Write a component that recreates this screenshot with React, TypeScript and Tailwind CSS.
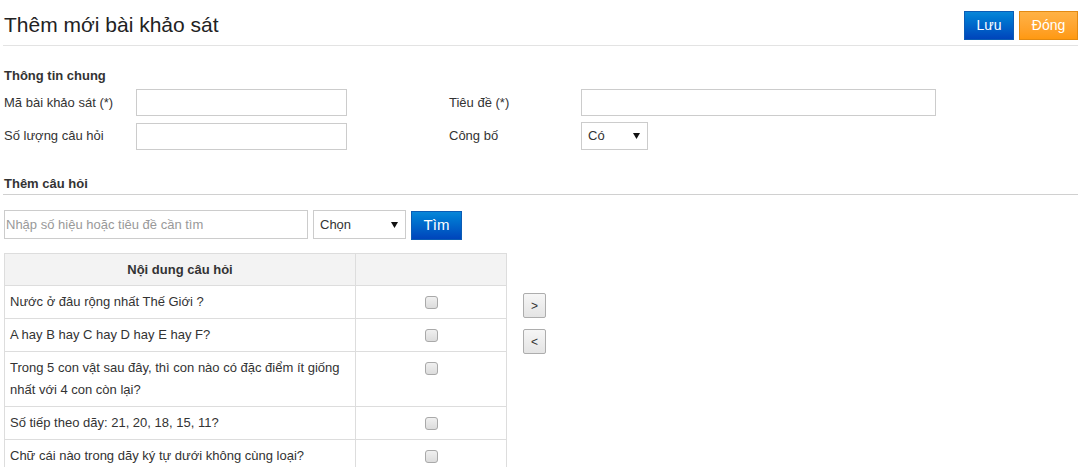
import React from "react";

const questions = [
  "Nước ở đâu rộng nhất Thế Giới ?",
  "A hay B hay C hay D hay E hay F?",
  "Trong 5 con vật sau đây, thì con nào có đặc điểm ít giống nhất với 4 con còn lại?",
  "Số tiếp theo dãy: 21, 20, 18, 15, 11?",
  "Chữ cái nào trong dãy ký tự dưới không cùng loại?",
];

function Caret() {
  return (
    <svg width="7" height="6" viewBox="0 0 7 6" className="shrink-0">
      <path d="M0 0H7L3.5 6Z" fill="#111" />
    </svg>
  );
}

function FakeSelect({ value, className }: { value: string; className: string }) {
  return (
    <div
      className={`flex items-center justify-between border border-[#ccc] bg-white pl-[6px] pr-[7px] text-[13px] text-[#333] ${className}`}
    >
      <span>{value}</span>
      <Caret />
    </div>
  );
}

function Check() {
  return (
    <span className="mx-auto mt-[5px] block h-[13px] w-[13px] rounded-[3px] border border-[#a9a9a9] bg-gradient-to-b from-[#f0f0f0] to-[#dcdcdc]" />
  );
}

function SmallBtn({ label }: { label: string }) {
  return (
    <button className="flex h-[25px] w-[23px] items-center justify-center rounded-[2px] border border-[#adadad] bg-gradient-to-b from-[#f6f6f6] to-[#e4e4e4] text-[12px] text-[#333]">
      {label}
    </button>
  );
}

export default function App() {
  return (
    <div className="min-h-[467px] bg-white font-['Liberation_Sans',Arial,sans-serif] text-[13px] text-[#333]">
      <div className="ml-[3px] w-[1075px]">
        {/* header */}
        <div className="flex h-[46px] items-start justify-between border-b border-[#e3e3e3]">
          <h1 className="mt-[12px] pl-[1px] text-[21px] leading-[26px] text-[#222]">
            Thêm mới bài khảo sát
          </h1>
          <div className="mt-[11px] flex gap-[5px]">
            <button className="h-[29px] w-[50px] border border-[#0b5cb5] bg-gradient-to-b from-[#0a86d8] to-[#0044bb] text-[14px] text-white">
              Lưu
            </button>
            <button className="h-[29px] w-[59px] border border-[#e38a12] bg-gradient-to-b from-[#ffb245] to-[#ff990f] text-[14px] text-white">
              Đóng
            </button>
          </div>
        </div>

        {/* general info */}
        <div className="mt-[20px] pl-[1px] text-[13px] font-bold leading-[20px] text-[#333]">Thông tin chung</div>
        <div className="mt-[3px] flex flex-col gap-[6px] pl-[1px]">
          <div className="flex items-center">
            <span className="w-[132px]">Mã bài khảo sát (*)</span>
            <div className="h-[27px] w-[211px] border border-[#ccc]" />
            <span className="ml-[102px] w-[132px]">Tiêu đề (*)</span>
            <div className="h-[27px] w-[355px] border border-[#ccc]" />
          </div>
          <div className="flex items-center">
            <span className="w-[132px]">Số lượng câu hỏi</span>
            <div className="h-[27px] w-[211px] border border-[#ccc]" />
            <span className="ml-[102px] w-[132px]">Công bố</span>
            <FakeSelect value="Có" className="h-[28px] w-[67px]" />
          </div>
        </div>

        {/* add questions */}
        <div className="mt-[24px] border-b border-[#d0d0d0] pl-[1px] font-bold leading-[20px]">Thêm câu hỏi</div>

        <div className="mt-[15px] flex items-start gap-[5px] pl-[1px]">
          <div className="flex h-[29px] w-[304px] items-center border border-[#ccc] pl-[1px] text-[13px] text-[#999]">
            Nhập số hiệu hoặc tiêu đề cần tìm
          </div>
          <FakeSelect value="Chọn" className="h-[29px] w-[93px]" />
          <button className="mt-[1px] h-[29px] w-[51px] border border-[#0b5cb5] bg-gradient-to-b from-[#0a86d8] to-[#0044bb] text-[15px] text-white">
            Tìm
          </button>
        </div>

        <div className="mt-[13px] flex items-start pl-[1px]">
          <table className="w-[503px] border-collapse">
            <thead>
              <tr className="bg-[#f3f3f3]">
                <th className="h-[32px] w-[351px] border border-[#dddddd] font-bold">Nội dung câu hỏi</th>
                <th className="border border-[#dddddd]" />
              </tr>
            </thead>
            <tbody>
              {questions.map((q) => (
                <tr key={q}>
                  <td className="border border-[#dddddd] px-[5px] py-[5px] align-top leading-[22px]">{q}</td>
                  <td className="border border-[#dddddd] py-[5px] align-top leading-[22px]">
                    <Check />
                  </td>
                </tr>
              ))}
            </tbody>
          </table>
          <div className="ml-[16px] mt-[40px] flex flex-col gap-[11px]">
            <SmallBtn label=">" />
            <SmallBtn label="<" />
          </div>
        </div>
      </div>
    </div>
  );
}
